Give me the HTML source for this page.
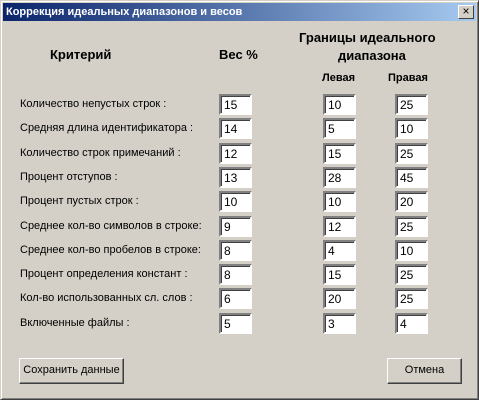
<!DOCTYPE html>
<html><head><meta charset="utf-8"><style>
*{margin:0;padding:0;box-sizing:border-box}
body{width:479px;height:400px;background:#d4d0c8;font-family:"Liberation Sans","DejaVu Sans",sans-serif;font-size:11px;position:relative;overflow:hidden}
.win{position:absolute;left:0;top:0;width:479px;height:400px;border:1px solid;border-color:#d4d0c8 #404040 #404040 #d4d0c8;box-shadow:inset 1px 1px #fff,inset -1px -1px #808080}
.title{position:absolute;left:3px;top:3px;width:473px;height:18px;background:linear-gradient(90deg,#0a246a,#a6caf0);color:#fff;font-weight:bold;font-size:11px;line-height:18px;padding-left:3px}
.close{position:absolute;left:455px;top:2px;width:16px;height:14px;background:#d4d0c8;border:1px solid;border-color:#fff #404040 #404040 #fff;color:#000;font-size:12px;line-height:11px;text-align:center;font-weight:normal}
.a{position:absolute;white-space:nowrap}
.h{font-weight:bold;font-size:13px}
.h2{font-weight:bold;font-size:11px}
.in{position:absolute;width:33px;height:21px;background:#fff;border:2px solid;border-color:#808080 #fff #fff #808080;box-shadow:inset 1px 1px #404040;font-size:12px;padding:2px 0 0 3px;line-height:15px}
.btn{position:absolute;height:26px;border:1px solid;border-color:#fff #404040 #404040 #fff;box-shadow:inset -1px -1px #808080;text-align:center;line-height:23px;font-size:11px}
</style></head><body>
<div class="win"></div>
<div class="title">Коррекция идеальных диапазонов и весов<div class="close">×</div></div>
<div class="a h" style="left:50px;top:47px">Критерий</div>
<div class="a h" style="left:219px;top:47px">Вес %</div>
<div class="a h" style="left:299px;top:30px">Границы идеального</div>
<div class="a h" style="left:338px;top:48px">диапазона</div>
<div class="a h2" style="left:322px;top:72px">Левая</div>
<div class="a h2" style="left:388px;top:72px">Правая</div>
<div id="rows"></div>
<div class="btn" style="left:19px;top:358px;width:105px">Сохранить данные</div>
<div class="btn" style="left:387px;top:358px;width:75px">Отмена</div>
<script>
var d=[["Количество непустых строк :",15,10,25],["Средняя длина идентификатора :",14,5,10],["Количество строк примечаний  :",12,15,25],["Процент отступов :",13,28,45],["Процент пустых строк :",10,10,20],["Среднее кол-во символов в строке:",9,12,25],["Среднее кол-во пробелов в строке:",8,4,10],["Процент определения констант :",8,15,25],["Кол-во использованных сл. слов :",6,20,25],["Включенные файлы :",5,3,4]];
var h="";d.forEach(function(r,i){var y=Math.round(94+i*24.3);
h+='<div class="a" style="left:20px;top:'+(y+4)+'px">'+r[0]+'</div>';
h+='<div class="in" style="left:219px;top:'+y+'px">'+r[1]+'</div>';
h+='<div class="in" style="left:323px;top:'+y+'px">'+r[2]+'</div>';
h+='<div class="in" style="left:395px;top:'+y+'px">'+r[3]+'</div>';});
document.getElementById("rows").innerHTML=h;
</script>
</body></html>
